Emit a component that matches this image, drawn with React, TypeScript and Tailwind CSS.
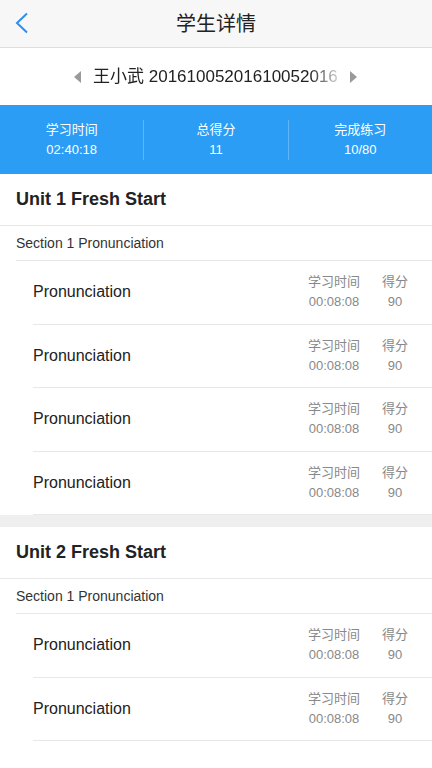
import React from "react";

const FONT = { fontFamily: '"Liberation Sans", "Noto Sans CJK SC", sans-serif' };

type Item = { name: string; time: string; score: number };

const unit1: Item[] = Array.from({ length: 4 }, () => ({ name: "Pronunciation", time: "00:08:08", score: 90 }));
const unit2: Item[] = Array.from({ length: 2 }, () => ({ name: "Pronunciation", time: "00:08:08", score: 90 }));

function ItemRow({ item }: { item: Item }) {
  return (
    <div className="ml-[33px] flex h-[63.5px] items-center border-b border-[#e8e8e8] pr-[24px]">
      <div className="flex-1 text-[16px] text-[#222]">{item.name}</div>
      <div className="flex gap-[22px] text-[13px] leading-[20px] text-[#888]">
        <div className="flex flex-col items-center">
          <span>学习时间</span>
          <span>{item.time}</span>
        </div>
        <div className="flex flex-col items-center">
          <span>得分</span>
          <span>{item.score}</span>
        </div>
      </div>
    </div>
  );
}

function Unit({ title, section, items }: { title: string; section: string; items: Item[] }) {
  return (
    <div className="bg-white">
      <div className="flex h-[52px] items-center border-b border-[#e8e8e8] px-4 text-[18px] font-bold text-[#222]">
        {title}
      </div>
      <div className="ml-4 flex h-[35px] items-center border-b border-[#e8e8e8] text-[14px] text-[#333]">
        {section}
      </div>
      {items.map((it, i) => (
        <ItemRow key={i} item={it} />
      ))}
    </div>
  );
}

export default function App() {
  const stats = [
    { label: "学习时间", value: "02:40:18" },
    { label: "总得分", value: "11" },
    { label: "完成练习", value: "10/80" },
  ];

  return (
    <div className="h-[768px] w-[432px] overflow-hidden bg-white" style={FONT}>
      {/* nav bar */}
      <div className="relative flex h-[48px] items-center justify-center border-b border-[#dedede] bg-[#f7f7f7]">
        <svg className="absolute left-[14px] top-[12px]" width="16" height="22" viewBox="0 0 16 22">
          <path d="M13 1.5 L3 11 L13 20.5" fill="none" stroke="#2b8ff0" strokeWidth="2" />
        </svg>
        <span className="text-[20px] text-[#222]">学生详情</span>
      </div>

      {/* student selector */}
      <div className="flex h-[57px] items-center pl-[74px]">
        <svg width="7" height="12" viewBox="0 0 7 12">
          <path d="M7 0 L0 6 L7 12 Z" fill="#9a9a9a" />
        </svg>
        <span className="ml-[12px] mr-[5px] w-[252px] overflow-hidden whitespace-nowrap text-[17px] text-[#222] [mask-image:linear-gradient(to_right,black_86%,transparent_100%)]">
          王小武 20161005201610052016
        </span>
        <svg width="7" height="12" viewBox="0 0 7 12">
          <path d="M0 0 L7 6 L0 12 Z" fill="#9a9a9a" />
        </svg>
      </div>

      {/* summary band */}
      <div className="flex h-[69px] items-center bg-[#2b9df5]">
        {stats.map((s, i) => (
          <div
            key={s.label}
            className={
              "flex flex-1 flex-col items-center text-[13px] leading-[20px] text-white " +
              (i > 0 ? "border-l border-white/25" : "")
            }
          >
            <span>{s.label}</span>
            <span>{s.value}</span>
          </div>
        ))}
      </div>

      <Unit title="Unit 1 Fresh Start" section="Section 1 Pronunciation" items={unit1} />
      <div className="h-[12px] bg-[#efefef]" />
      <Unit title="Unit 2 Fresh Start" section="Section 1 Pronunciation" items={unit2} />
    </div>
  );
}
